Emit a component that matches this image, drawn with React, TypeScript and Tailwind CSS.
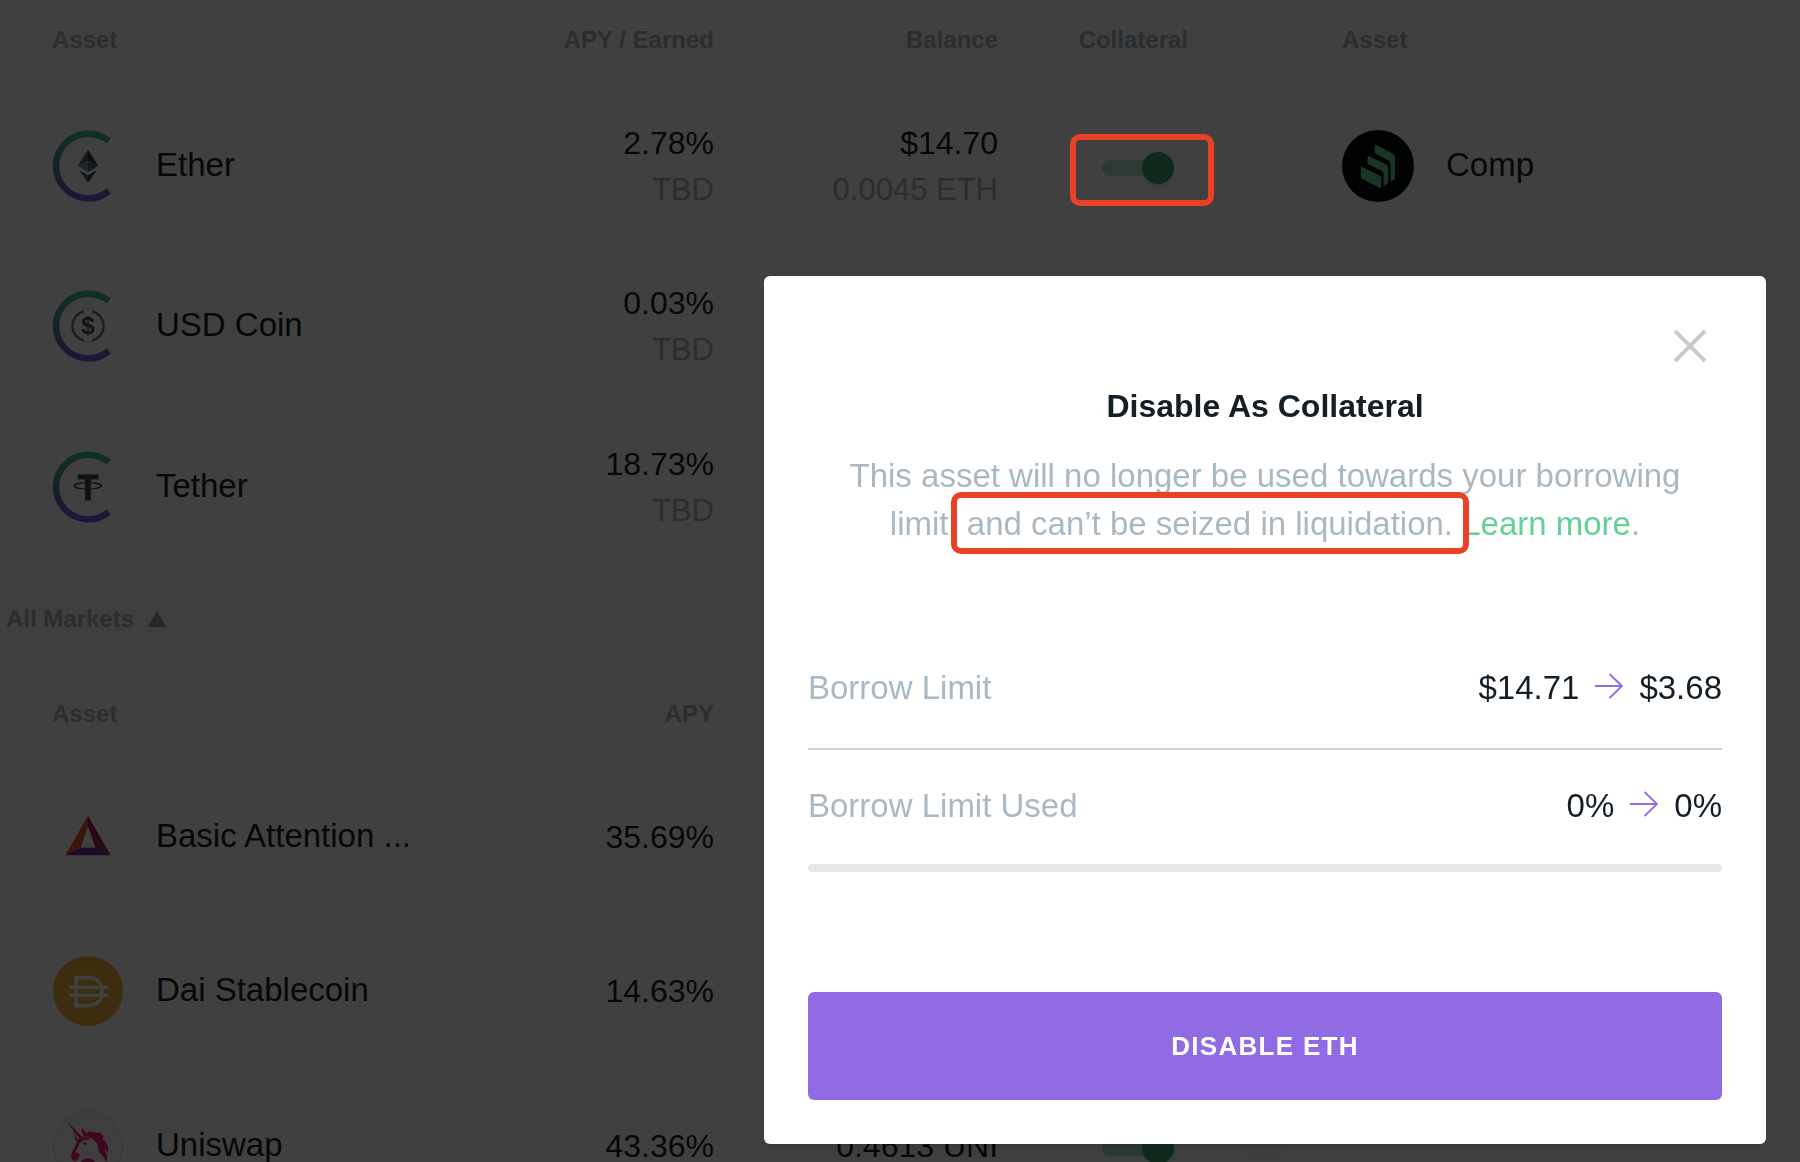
import type { ReactNode } from "react";

function Ring({ id, children }: { id: string; children: ReactNode }) {
  return (
    <svg viewBox="0 0 72 72" className="size-18 shrink-0" aria-hidden="true">
      <defs>
        <linearGradient id={id} x1="0" y1="0" x2="0" y2="1">
          <stop offset="0" stopColor="#3fbf8a" />
          <stop offset="0.5" stopColor="#5585a8" />
          <stop offset="1" stopColor="#7556d8" />
        </linearGradient>
      </defs>
      <path d="M56.9 11.1 A32.3 32.3 0 1 0 56.9 60.9" fill="none" stroke={`url(#${id})`} strokeWidth="6.5" />
      {children}
    </svg>
  );
}

function EtherIcon() {
  return (
    <Ring id="ring-eth">
      <path d="M36 19.5 L25.7 36 L36 31 Z" fill="#5a6672" />
      <path d="M36 19.5 L46.3 36 L36 31 Z" fill="#2c3844" />
      <path d="M25.7 36 L36 31 V42 Z" fill="#8a949d" />
      <path d="M46.3 36 L36 31 V42 Z" fill="#5d6973" />
      <path d="M27 40 L36 45.3 V52.5 Z" fill="#5a6672" />
      <path d="M45 40 L36 45.3 V52.5 Z" fill="#2c3844" />
    </Ring>
  );
}

function UsdcIcon() {
  return (
    <Ring id="ring-usdc">
      <g fill="none" stroke="#6c7683" strokeWidth="2.4">
        <path d="M32 21.4 A15 15 0 0 0 32 50.6" />
        <path d="M40 21.4 A15 15 0 0 1 40 50.6" />
      </g>
      <text x="36" y="44" textAnchor="middle" fill="#3c4754" className="font-['Liberation_Sans'] text-[24px] font-bold">
        $
      </text>
    </Ring>
  );
}

function TetherIcon() {
  return (
    <Ring id="ring-usdt">
      <path d="M25.6 23.6 H46.6 V28.4 H38.8 V49.4 H33 V28.4 H25.6 Z" fill="#3c4854" />
      <ellipse cx="35.8" cy="34.8" rx="13.6" ry="3.2" fill="none" stroke="#3c4854" strokeWidth="1.3" />
    </Ring>
  );
}

function BatIcon() {
  return (
    <svg viewBox="0 0 72 72" className="size-18 shrink-0" aria-hidden="true">
      <path d="M36 14.7 L13.3 54.3 L29 46.3 L36 26.7 Z" fill="#e8562a" />
      <path d="M36 14.7 L58.7 54.3 L43 46.3 L36 26.7 Z" fill="#9e1f63" />
      <path d="M13.3 54.3 H58.7 L43 46.3 H29 Z" fill="#662d91" />
      <path d="M36 25.5 L28.6 46.6 H43.4 Z" fill="#fff" />
    </svg>
  );
}

function DaiIcon() {
  return (
    <svg viewBox="0 0 72 72" className="size-18 shrink-0" aria-hidden="true">
      <circle cx="36" cy="36" r="35" fill="#f0b33a" />
      <g fill="none" stroke="#fff" strokeWidth="3.8">
        <path d="M24 22.6 H35 C45 22.6 50 28 50 36.6 C50 45 45 50.6 35 50.6 H24 Z" />
        <path d="M17.5 32.4 H56.5 M17.5 40.4 H56.5" strokeWidth="3.4" />
      </g>
    </svg>
  );
}

function UniswapIcon() {
  return (
    <svg viewBox="0 0 72 72" className="size-18 shrink-0" aria-hidden="true">
      <circle cx="36" cy="36" r="34.5" fill="#fbf5f8" stroke="#f3c9dc" strokeWidth="1" />
      <g fill="#f51f7d">
        <path d="M16.3 12.4 C20 17 25 21 29.6 26.4 L27.6 28.2 C23 23.6 19.4 18 16.3 12.4 Z" />
        <path d="M21.8 19.8 C22 24 23.4 27 25.8 30 L24 31.6 C22.4 28 21.6 24 21.8 19.8 Z" />
        <path d="M29.8 18 C29.6 22 30.6 25 33 27 L36 26 C34.6 23 32.4 20.4 29.8 18 Z" />
        <path d="M36 21.5 C42 21.6 46 24 50.5 22.6 C48 25 50 26 52 25.4 C50 28 50.6 29.6 52.6 30.4 C55.8 34 57 39 55.6 43 C54.6 40.6 53.4 39.4 51.4 39 C55 42 56.4 47 54 53 C53.4 48 50 44.6 46.6 42 C47.6 36 44 30 38 28 L34.5 27 Z" />
        <path d="M25.4 29.6 L30 26.6 C34 27.4 37 28 38.6 30 C34 29.4 30.4 30.6 28 33 C26 36 24.6 40 23 42.6 L27.6 43.6 C28 47 26 51 22.4 51 C19 50 18 45 20.4 41.6 C22.6 38 24.6 34 25.4 29.6 Z" />
        <path d="M30.5 33.6 C32 32.4 34.4 32.4 35.4 34 C33.8 35.2 31.6 35.4 30.5 33.6 Z" />
        <path d="M29 52 C31 48.6 36 47.6 39.6 49 C43 50.6 44 55 42 59 L30 59 C33 56 32 53 29 52 Z" />
      </g>
    </svg>
  );
}

function CompIcon() {
  return (
    <svg viewBox="0 0 72 72" className="size-18 shrink-0" aria-hidden="true">
      <circle cx="36" cy="36" r="36" fill="#070a0e" />
      <g fill="#62d197">
        <path d="M32.7 16 Q32.7 14.2 34.4 15 L50.6 23.4 Q53 24.8 53 27.6 V47.4 Q53 49 51.6 50 L48.6 51.6 V34.6 Q48.6 31.8 46.2 30.4 L34 24 Q32.7 23.2 32.7 21.6 Z" />
        <path d="M25.6 27.4 Q25.6 25.4 27.4 26.2 L43.6 34.2 Q46.2 35.6 46.2 38.4 V51.6 Q46.2 53.4 44.8 54.2 L41.6 55.8 V45 Q41.6 42 39.2 40.8 L27 34.6 Q25.6 33.8 25.6 32.2 Z" />
        <path d="M18.8 38.2 Q18.8 36.4 20.6 37.2 L36.4 44.8 Q39.2 46 39.2 48.4 V56.6 Q39.2 58.6 37.4 57.8 L20.6 49.2 Q18.8 48.2 18.8 46.2 Z" />
      </g>
    </svg>
  );
}

function Toggle({ label, highlighted = false }: { label: string; highlighted?: boolean }) {
  return (
    <span className="relative mt-1 inline-flex">
      <label className="flex h-9 w-18 cursor-pointer items-center">
        <input type="checkbox" defaultChecked aria-label={label} className="sr-only" />
        <span className="-mr-5 h-4 flex-1 rounded-full bg-[#62d197]/50" />
        <span className="size-8 rounded-full bg-[#3fa873] shadow-md" />
      </label>
      {highlighted && (
        <span className="pointer-events-none absolute -top-4 -right-10 -bottom-5 -left-8 z-20 rounded-[10px] border-6 border-[#e84125]" />
      )}
    </span>
  );
}

type Row = {
  icon: ReactNode;
  name: string;
  apy: string;
  earned?: string;
  balance?: string;
  amount?: string;
  highlighted?: boolean;
};

const supplied: Row[] = [
  { icon: <EtherIcon />, name: "Ether", apy: "2.78%", earned: "TBD", balance: "$14.70", amount: "0.0045 ETH", highlighted: true },
  { icon: <UsdcIcon />, name: "USD Coin", apy: "0.03%", earned: "TBD" },
  { icon: <TetherIcon />, name: "Tether", apy: "18.73%", earned: "TBD" },
];

const markets: Row[] = [
  { icon: <BatIcon />, name: "Basic Attention ...", apy: "35.69%" },
  { icon: <DaiIcon />, name: "Dai Stablecoin", apy: "14.63%" },
  { icon: <UniswapIcon />, name: "Uniswap", apy: "43.36%", balance: "0.4613 UNI" },
];

const th = "p-0 text-2xl font-bold text-[#aab8c1]";

function MarketTable({ rows, headings, headClass, rowClass }: { rows: Row[]; headings: string[]; headClass: string; rowClass: string }) {
  return (
    <table className="w-full table-fixed border-collapse bg-white">
      <colgroup>
        <col className="w-[35%]" />
        <col className="w-[22.3%]" />
        <col className="w-[22.8%]" />
        <col />
      </colgroup>
      <thead>
        <tr className={headClass}>
          <th className={`${th} pl-13 text-left`}>{headings[0]}</th>
          <th className={`${th} text-right`}>{headings[1]}</th>
          <th className={`${th} text-right`}>{headings[2]}</th>
          <th className={`${th} pr-[58px] text-right`}>{headings[3]}</th>
        </tr>
      </thead>
      <tbody className="text-[32px] leading-12 text-[#141e27]">
        {rows.map((row) => (
          <tr key={row.name} className={rowClass}>
            <td className="p-0 pl-13 text-[33px]">
              <div className="flex items-center gap-8 whitespace-nowrap">
                {row.icon}
                <span className="-mt-0.5">{row.name}</span>
              </div>
            </td>
            <td className="p-0 text-right">
              <div>{row.apy}</div>
              {row.earned && <div className="text-[31px] leading-[46px] text-[#aab8c1]">{row.earned}</div>}
            </td>
            <td className="p-0 text-right whitespace-nowrap">
              <div>{row.balance}</div>
              {row.amount && <div className="text-[31px] leading-[46px] text-[#aab8c1]">{row.amount}</div>}
            </td>
            <td className="p-0 pr-18 text-right leading-none">
              {row.balance && <Toggle label={`Use ${row.name} as collateral`} highlighted={row.highlighted} />}
            </td>
          </tr>
        ))}
      </tbody>
    </table>
  );
}

function Arrow() {
  return (
    <svg viewBox="0 0 28 26" className="-mt-1 h-[26px] w-7" fill="none" stroke="#906be4" strokeWidth="1.8" aria-hidden="true">
      <path d="M0 13 H27 M14.5 1 L27 13 L14.5 25" />
    </svg>
  );
}

function Change({ label, from, to }: { label: string; from: string; to: string }) {
  return (
    <div className="flex items-center justify-between text-[33px] leading-12">
      <span className="text-[#aab8c1]">{label}</span>
      <span className="flex items-center gap-4 text-[#141e27]">
        {from}
        <Arrow />
        {to}
      </span>
    </div>
  );
}

export default function App() {
  return (
    <div className="h-screen overflow-hidden bg-[#f9fafb] font-['Liberation_Sans',Arial,sans-serif]">
      <main className="grid grid-cols-[1246fr_518fr] items-start gap-x-9">
        <div>
          <section className="shadow-xs">
            <MarketTable
              rows={supplied}
              headings={["Asset", "APY / Earned", "Balance", "Collateral"]}
              headClass="h-[86px] [&>th]:pb-1.5"
              rowClass="h-40 border-t-2 border-[#f5f6f7]"
            />
          </section>
          <button type="button" className="flex h-[98px] items-center gap-3.5 pt-2 pl-1.5 text-2xl font-bold text-[#aab8c1]">
            All Markets
            <svg viewBox="0 0 18 16" className="h-4 w-[18px]" fill="#8f9ca5" aria-hidden="true">
              <path d="M9 0 L18 16 H0 Z" />
            </svg>
          </button>
          <section className="shadow-xs">
            <MarketTable
              rows={markets}
              headings={["Asset", "APY", "", ""]}
              headClass="h-24 [&>th]:pt-1"
              rowClass="h-[154px] border-t-2 border-[#f5f6f7]"
            />
          </section>
        </div>

        <div>
          <section className="bg-white shadow-xs">
            <table className="w-full border-collapse">
              <thead>
                <tr className="h-[86px]">
                  <th className={`${th} pb-1.5 pl-15 text-left`}>Asset</th>
                </tr>
              </thead>
              <tbody>
                <tr className="h-40 border-t-2 border-[#f5f6f7]">
                  <td className="p-0 pb-0.5 pl-15 text-[33px] leading-12 text-[#141e27]">
                    <div className="flex items-center gap-8">
                      <CompIcon />
                      <span className="-mt-0.5">Comp</span>
                    </div>
                  </td>
                </tr>
              </tbody>
            </table>
          </section>
          <section className="mt-[98px] divide-y-2 divide-[#f5f6f7] bg-white shadow-xs">
            <div className="h-24" />
            <div className="h-[154px]" />
            <div className="h-[154px]" />
            <div className="h-[154px]" />
            <div className="h-[154px]" />
            <div className="h-[154px]" />
          </section>
        </div>
      </main>

      <div className="fixed inset-0 z-10 flex items-start justify-end bg-black/75 pt-[276px] pr-[34px]">
        <div role="dialog" aria-modal="true" aria-labelledby="dialog-title" className="w-full max-w-[1002px] rounded-md bg-white p-11 shadow-lg">
          <div className="flex h-[62px] justify-end pr-4">
            <button type="button" aria-label="Close" className="mt-2.5 flex size-8 items-center justify-center">
              <svg viewBox="0 0 32 32" className="size-8" stroke="#c9c9c9" strokeWidth="4" aria-hidden="true">
                <path d="M1 1 L31 31 M31 1 L1 31" />
              </svg>
            </button>
          </div>
          <h2 id="dialog-title" className="text-center text-[32px] leading-12 font-bold text-[#141e27]">
            Disable As Collateral
          </h2>
          <p className="mt-5.5 text-center text-[33px] leading-12 text-[#aab8c1]">
            This asset will no longer be used towards your borrowing
            <br />
            limit,{" "}
            <span className="relative inline-block">
              and can’t be seized in liquidation.
              <span className="pointer-events-none absolute -inset-x-4 -top-2 -bottom-1.5 rounded-[10px] border-6 border-[#e84125]" />
            </span>{" "}
            <a href="#learn-more" className="text-[#62d197]">Learn more</a>.
          </p>
          <div className="mt-29 border-b-2 border-[#cdd3d5] pb-9">
            <Change label="Borrow Limit" from="$14.71" to="$3.68" />
          </div>
          <div className="mt-8">
            <Change label="Borrow Limit Used" from="0%" to="0%" />
          </div>
          <div className="mt-8.5 h-2 rounded-full bg-[#e6e8eb]" />
          <button type="button" className="mt-30 h-27 w-full rounded-md bg-[#906be4] text-[26px] font-bold tracking-wider text-white">
            DISABLE ETH
          </button>
        </div>
      </div>
    </div>
  );
}
